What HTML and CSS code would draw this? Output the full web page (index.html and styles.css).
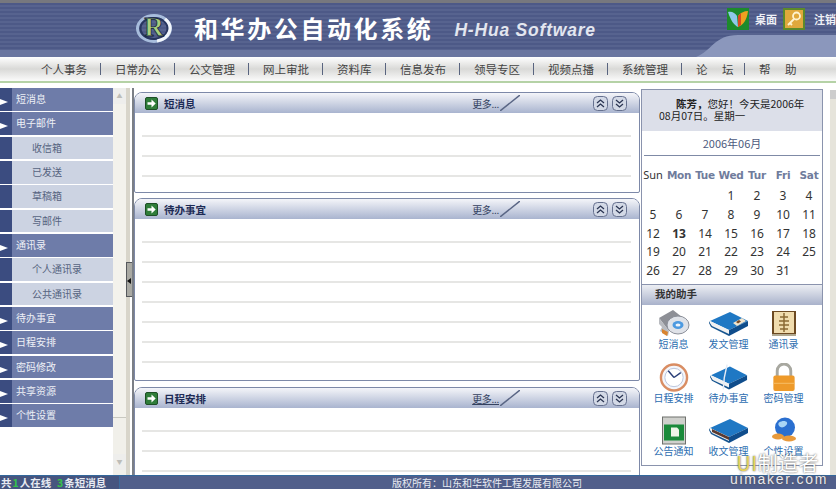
FILE: index.html
```html
<!doctype html>
<html>
<head>
<meta charset="utf-8">
<title>和华办公自动化系统</title>
<link rel="stylesheet" href="styles.css">
</head>

<body>
<svg class="defs" width="0" height="0">
	<symbol id="go" viewBox="0 0 13 13">
		<rect x="0.5" y="0.5" width="12" height="12" rx="1.5" fill="#2f7d3a" stroke="#1d4f26"/>
		<path d="M2.5 5.2h4V2.6l4.2 3.9-4.2 3.9V7.8h-4z" fill="#fff"/>
	</symbol>
	<symbol id="up" viewBox="0 0 15 15">
		<rect x="0.5" y="0.5" width="14" height="14" rx="4" fill="#d3d9e6" stroke="#66718f"/>
		<path d="M4 7l3.5-3L11 7M4 11l3.5-3 3.5 3" fill="none" stroke="#2b3553" stroke-width="1.3"/>
	</symbol>
	<symbol id="down" viewBox="0 0 15 15">
		<rect x="0.5" y="0.5" width="14" height="14" rx="4" fill="#d3d9e6" stroke="#66718f"/>
		<path d="M4 4l3.5 3L11 4M4 8l3.5 3L11 8" fill="none" stroke="#2b3553" stroke-width="1.3"/>
	</symbol>
	<symbol id="book" viewBox="0 0 40 28">
		<path d="M1 12L21 3l18 9-19 9z" fill="#1f78c4"/>
		<path d="M1 12l19 9v4L3 17z" fill="#f1f1f1"/>
		<path d="M1 12v2l2 3 17 8v2L2 18 0 14z" fill="#17558f"/>
		<path d="M20 21l19-9v5L20 27z" fill="#0f4d8c"/>
	</symbol>
</svg>

<div class="top-strip"></div>
<div class="banner">
	<svg class="banner-curve" width="140" height="22" viewBox="0 0 140 22"><path d="M0 22C16 16 18 0 42 0H140V22z" fill="#8b97bc"/></svg>
	<svg class="logo" width="38" height="31" viewBox="0 0 38 31">
		<ellipse cx="19" cy="15.5" rx="16.500" ry="13" fill="none" stroke="#a7bcdc" stroke-width="3"/>
		<ellipse cx="19" cy="15.5" rx="13.500" ry="10.500" fill="none" stroke="#27365f" stroke-width="2"/>
		<path d="M30 6a16.500 13 0 0 1-8 22" fill="none" stroke="#f2f6fb" stroke-width="3"/>
		<text x="19" y="23" text-anchor="middle" class="logo-r">R</text>
	</svg>
	<div class="title">和华办公自动化系统</div>
	<div class="subtitle">H-Hua Software</div>
	<div class="tools">
		<svg width="22" height="22" viewBox="0 0 22 22">
			<rect width="22" height="22" fill="#1d8a2c"/>
			<path d="M1 4c4-1 7 1 9 4l1 11C7 17 4 13 1 4z" fill="#8fc8ea"/>
			<path d="M21 3c-4 0-8 2-10 5v11c5-2 9-7 10-16z" fill="#f0a020"/>
			<path d="M14 5l-3 3v11l3-2z" fill="#d84a20"/>
		</svg>
		<span class="tool-text">桌面</span>
		<svg class="tool-key" width="22" height="22" viewBox="0 0 22 22">
			<rect width="22" height="22" fill="#5d8a2a"/>
			<rect x="2" y="2" width="18" height="18" fill="#e0a83c"/>
			<circle cx="13.500" cy="8" r="3.500" fill="none" stroke="#fff3cf" stroke-width="1.800"/>
			<path d="M11 11l-6 6M7 15l2 2" fill="none" stroke="#fff3cf" stroke-width="1.800"/>
		</svg>
		<span class="tool-text">注销</span>
	</div>
</div>

<ul class="nav">
	<li>个人事务</li>
	<li>日常办公</li>
	<li>公文管理</li>
	<li>网上审批</li>
	<li>资料库</li>
	<li>信息发布</li>
	<li>领导专区</li>
	<li>视频点播</li>
	<li>系统管理</li>
	<li class="wide">论 坛</li>
	<li class="wide last">帮 助</li>
</ul>

<div class="content">
	<div class="side">
		<ul class="menu">
			<li class="group">短消息</li>
			<li class="group">电子邮件</li>
			<li class="sub">收信箱</li>
			<li class="sub">已发送</li>
			<li class="sub">草稿箱</li>
			<li class="sub">写邮件</li>
			<li class="group">通讯录</li>
			<li class="sub">个人通讯录</li>
			<li class="sub">公共通讯录</li>
			<li class="group">待办事宜</li>
			<li class="group">日程安排</li>
			<li class="group">密码修改</li>
			<li class="group">共享资源</li>
			<li class="group">个性设置</li>
		</ul>
		<div class="side-scroll">
			<div class="scroll-btn">▲</div>
			<div class="scroll-thumb"></div>
			<div class="scroll-btn scroll-end">▼</div>
		</div>
	</div>

	<div class="split"><div class="split-handle"></div></div>

	<div class="main">
		<div class="panel panel-msg">
			<div class="panel-head">
				<svg class="go" width="13" height="13"><use href="#go"/></svg>
				<b>短消息</b>
				<span class="more">更多...</span>
				<svg class="slash" width="20" height="16" viewBox="0 0 20 16"><path d="M0 16L20 0" stroke="#5a6685" stroke-width="1.500"/></svg>
				<svg class="btn" width="15" height="15"><use href="#up"/></svg>
				<svg class="btn" width="15" height="15"><use href="#down"/></svg>
			</div>
			<div class="rows"><div></div><div></div><div></div></div>
		</div>

		<div class="panel panel-todo">
			<div class="panel-head">
				<svg class="go" width="13" height="13"><use href="#go"/></svg>
				<b>待办事宜</b>
				<span class="more">更多...</span>
				<svg class="slash" width="20" height="16" viewBox="0 0 20 16"><path d="M0 16L20 0" stroke="#5a6685" stroke-width="1.500"/></svg>
				<svg class="btn" width="15" height="15"><use href="#up"/></svg>
				<svg class="btn" width="15" height="15"><use href="#down"/></svg>
			</div>
			<div class="rows"><div></div><div></div><div></div><div></div><div></div><div></div><div></div></div>
		</div>

		<div class="panel panel-plan">
			<div class="panel-head">
				<svg class="go" width="13" height="13"><use href="#go"/></svg>
				<b>日程安排</b>
				<span class="more more-link">更多...</span>
				<svg class="slash" width="20" height="16" viewBox="0 0 20 16"><path d="M0 16L20 0" stroke="#5a6685" stroke-width="1.500"/></svg>
				<svg class="btn" width="15" height="15"><use href="#up"/></svg>
				<svg class="btn" width="15" height="15"><use href="#down"/></svg>
			</div>
			<div class="rows"><div></div><div></div><div></div></div>
		</div>
	</div>

	<div class="right">
		<div class="cal-box">
			<div class="hello"><b>陈芳，</b>您好！今天是2006年<br>08月07日。星期一</div>
			<div class="month">2006年06月</div>
			<div class="cal">
				<span class="sun">Sun</span><span class="wk">Mon</span><span class="wk">Tue</span><span class="wk">Wed</span><span class="wk">Tur</span><span class="wk">Fri</span><span class="wk">Sat</span>
				<span></span><span></span><span></span><span>1</span><span>2</span><span>3</span><span>4</span>
				<span>5</span><span>6</span><span>7</span><span>8</span><span>9</span><span>10</span><span>11</span>
				<span>12</span><span class="today">13</span><span>14</span><span>15</span><span>16</span><span>17</span><span>18</span>
				<span>19</span><span>20</span><span>21</span><span>22</span><span>23</span><span>24</span><span>25</span>
				<span>26</span><span>27</span><span>28</span><span>29</span><span>30</span><span>31</span><span></span>
			</div>
		</div>
		<div class="help-box">
			<div class="help-head">我的助手</div>
			<div class="help-grid">
				<div class="tool">
					<svg width="32" height="29" viewBox="0 0 32 29">
						<path d="M1 9L15 1l9 7-13 14z" fill="#8d8f96"/>
						<path d="M1 9l10 13-1 5-8-5 2-4-3-3z" fill="#b9bbc0"/>
						<path d="M4 20l6 3-1 4-5-3z" fill="#d9842f"/>
						<ellipse cx="20" cy="16" rx="11" ry="9" fill="#dfe2e8" stroke="#8b8f99"/>
						<ellipse cx="20" cy="16" rx="5.500" ry="4" fill="#4d9ae0"/>
						<ellipse cx="20" cy="16" rx="2.500" ry="1.600" fill="#eef4fb"/>
					</svg>
					<span>短消息</span>
				</div>
				<div class="tool">
					<svg width="40" height="29" viewBox="0 0 40 29"><use href="#book" width="40" height="28"/><path d="M24 14l9-5 4 3-9 5z" fill="#f2e6cf"/><path d="M27 13l3-2 2 1.500-3 2z" fill="#7a4a25"/></svg>
					<span>发文管理</span>
				</div>
				<div class="tool">
					<svg width="26" height="29" viewBox="0 0 26 29">
						<rect x="1" y="2" width="24" height="24" fill="#6d4a22"/>
						<rect x="3" y="3" width="20" height="21" fill="#f0dcae"/>
						<path d="M13 4v19M9 8h8M8 12h10M8 16h10M9 20h8" stroke="#8a6a35" stroke-width="1.500"/>
						<rect x="1" y="25" width="24" height="2" fill="#b0a890"/>
					</svg>
					<span>通讯录</span>
				</div>
				<div class="tool">
					<svg width="30" height="29" viewBox="0 0 30 30">
						<circle cx="15" cy="15" r="13.500" fill="#f4f6fb" stroke="#d98d63" stroke-width="2.500"/>
						<circle cx="15" cy="15" r="9.500" fill="#fff" stroke="#b9c4dc"/>
						<path d="M15 15L9 8M15 15l7-5" stroke="#2a3f78" stroke-width="1.500" fill="none"/>
					</svg>
					<span>日程安排</span>
				</div>
				<div class="tool">
					<svg width="38" height="29" viewBox="0 0 40 29">
						<use href="#book" width="40" height="28"/>
						<path d="M18 1l-3 14-1 12" stroke="#e5ebf5" stroke-width="1.500" fill="none"/>
					</svg>
					<span>待办事宜</span>
				</div>
				<div class="tool">
					<svg width="24" height="29" viewBox="0 0 24 30">
						<path d="M5 14V8a7 7 0 0 1 14 0v6" fill="none" stroke="#a8a8a0" stroke-width="3"/>
						<rect x="1" y="13" width="22" height="16" rx="2" fill="#ee9a2a"/>
						<path d="M1 21h22" stroke="#f7be69"/>
					</svg>
					<span>密码管理</span>
				</div>
				<div class="tool">
					<svg width="24" height="29" viewBox="0 0 24 28">
						<rect x="0.500" y="0.500" width="23" height="27" fill="#cfd0cc" stroke="#6e706c"/>
						<rect x="2" y="8" width="20" height="16" fill="#1a8a3a"/>
						<path d="M9 11h6l2 2v7H9z" fill="#eef5e8"/>
					</svg>
					<span>公告通知</span>
				</div>
				<div class="tool">
					<svg width="40" height="29" viewBox="0 0 40 29"><use href="#book" width="40" height="28"/><path d="M3 16l17 8v-3L3 13z" fill="#5a3a30"/></svg>
					<span>收文管理</span>
				</div>
				<div class="tool">
					<svg width="28" height="29" viewBox="0 0 28 28">
						<circle cx="15" cy="11" r="10" fill="#2a6fd0"/>
						<path d="M9 6c3-2 7-2 8 0s-3 5-5 5-5-3-3-5z" fill="#a9d4f5"/>
						<ellipse cx="8" cy="20" rx="6" ry="3" fill="#e89a3c"/>
						<ellipse cx="19" cy="22" rx="7" ry="3" fill="#e89a3c"/>
					</svg>
					<span>个性设置</span>
				</div>
			</div>
		</div>
	</div>

	<div class="page-scroll">
		<div class="page-btn"></div>
	</div>
</div>

<div class="foot">
	<div class="foot-left">共<i>1</i>人在线 &nbsp;<i>3</i>条短消息</div>
	<div class="foot-copy">版权所有：山东和华软件工程发展有限公司</div>
</div>

<div class="mark">
	<div class="mark-top"><em>UI</em>制造者</div>
	<div class="mark-url">uimaker.com</div>
</div>
</body>
</html>
```

FILE: styles.css
```css
*{margin:0; padding:0; list-style:none; box-sizing:border-box;}
html,body{width:836px; height:489px; overflow:hidden; background:#fff;}
body{
	position:relative;
	display:flex; flex-direction:column;
	font-family:"Noto Sans CJK SC","Liberation Sans",sans-serif;
	font-size:10px; color:#333;
}
.defs{position:absolute;}

/* header */
.top-strip{height:3px; background:#77787e; flex:none;}
.banner{
	position:relative;
	height:54px; flex:none;
	display:flex; align-items:flex-start;
	padding-left:135px;
	background:repeating-linear-gradient(#4d5987 0,#4d5987 2px,#57638f 2px,#57638f 4px);
	border-bottom:7px solid #6a76a0;
}
.banner-curve{position:absolute; right:0; bottom:-7px;}
.logo{margin-top:10px; flex:none;}
.logo-r{font-family:"Liberation Serif",serif; font-size:27px; font-weight:bold; fill:#a9cf7c; stroke:#14213f; stroke-width:0.8px;}
.title{
	margin:7px 0 0 21px;
	font-size:24px; line-height:36px; font-weight:bold;
	letter-spacing:2.600px; color:#fff; white-space:nowrap;
}
.subtitle{
	margin:15px 0 0 21px;
	font-family:"Liberation Sans",sans-serif;
	font-size:17.500px; line-height:24px; font-weight:bold; font-style:italic;
	letter-spacing:0.800px; color:#e3e6ef; white-space:nowrap;
}
.tools{
	position:absolute; left:727px; top:5px;
	display:flex; align-items:center; white-space:nowrap;
}
.tool-text{margin-left:6px; font-size:11px; font-weight:bold; color:#eef0f6;}
.tool-key{margin-left:6px;}
.tool-key + .tool-text{margin-left:9px;}

.nav{
	display:flex; align-items:center; flex:none;
	height:26px; padding:1px 0 1px 41px;
	background:linear-gradient(#fff,#d9d9d7 50%,#fbfbfb);
	border-bottom:2px solid #b5d2a6;
	font-size:11.500px; color:#444;
}
.nav li{
	width:60px; margin-right:14px; height:12px; line-height:12px;
	border-right:1px solid #59647f; white-space:nowrap;
}
.nav li:nth-child(5){width:49px;}
.nav li.wide{width:49px; word-spacing:12px;}
.nav li.last{border-right:0; margin-right:0;}

/* body of the page */
.content{
	flex:1; min-height:0;
	display:flex; padding-top:5px;
}
.side{width:126px; flex:none; display:flex;}
.menu{
	width:113px; height:339px;
	display:grid; grid-auto-rows:1fr; row-gap:1.500px;
}
.menu li{
	position:relative;
	border-left:12px solid #3b4c80;
	line-height:21px;
	white-space:nowrap;
}
.group{background:#6e7ca9; color:#edf0f6; padding-left:4px;}
.group::before{
	content:""; position:absolute; left:-12px; top:11px;
	border-left:8px solid #fff;
	border-top:3px solid transparent; border-bottom:3px solid transparent;
}
.sub{background:#ccd3e2; color:#56637f; padding-left:20px;}
.side-scroll{
	width:13px; height:100%;
	display:flex; flex-direction:column;
	background:#f1f0ea;
}
.scroll-btn{height:16px; flex:none; background:#eeeeec; color:#bdbdb8; font-size:6px; line-height:16px; text-align:center;}
.scroll-thumb{height:314px; flex:none; border-bottom:1px solid #c8c8c0; background:#f3f2ec;}
.scroll-end{margin-top:auto; margin-bottom:5px;}

.split{
	position:relative;
	width:8px; flex:none;
	background:#fff;
	border-left:4px solid #d8d5ca;
	border-right:2px solid #7b7f86;
}
.split-handle{
	position:absolute; left:-4px; top:174px;
	width:6px; height:35px;
	background:#a9a9a3;
	border:1px solid #55585c; border-width:1px 0 1px 1px;
}
.split-handle::after{
	content:""; position:absolute; left:0; top:15px;
	border-right:4px solid #111;
	border-top:3px solid transparent; border-bottom:3px solid transparent;
}

.main{width:506px; flex:none; padding-top:4px; overflow:hidden;}
.panel{
	border:1px solid #7d89a8; border-radius:8px 8px 2px 2px;
	margin-bottom:6px; background:#fff; overflow:hidden;
}
.panel-msg{height:101px; margin-bottom:5px;}
.panel-todo{height:183px;}
.panel-plan{height:120px;}
.panel-head{
	display:flex; align-items:center;
	height:20px; padding:0 12px 0 10px;
	background:linear-gradient(#f4f5f9,#a9b4cf);
	color:#1d2b55;
}
.go{flex:none;}
.panel-head b{margin-left:6px; font-size:10.500px;}
.more{margin-left:auto; color:#34415f; font-size:10px; letter-spacing:-0.300px;}
.more-link{text-decoration:underline;}
.slash{margin-left:1px; margin-right:69px; flex:none;}
.btn{margin-left:4px; flex:none;}
.rows{padding:4px 8px 0 7px;}
.rows div{height:20px; border-bottom:2px solid #e6e6e4;}

/* calendar and helpers */
.right{width:182px; flex:none; margin-left:1px; padding-top:1px;}
.cal-box{
	height:195px;
	border:1px solid #8a93ad; border-bottom:0;
	background:#fff;
}
.hello{
	height:41px; padding:8px 0 0 17px;
	text-indent:17px; line-height:12px;
	background:#dcdfe9; color:#222; font-size:10.500px;
}
.month{
	height:25px; line-height:25px; margin:0 2px;
	border-bottom:1px solid #7f8aa6;
	text-align:center; font-size:11px; color:#4d5a7d;
}
.cal{
	display:grid; grid-template-columns:repeat(7,26px);
	grid-template-rows:21px repeat(5,18.800px);
	margin-left:-2px; padding-top:10px;
	font-family:"Noto Sans",sans-serif; font-size:12px; color:#333;
	text-align:center;
}
.cal span{line-height:18px;}
.cal .sun{font-size:11px;}
.cal .wk{font-family:"DejaVu Sans",sans-serif; font-weight:bold; color:#6f7c9c; font-size:10.500px; letter-spacing:-0.300px;}
.cal .today{font-weight:bold;}
.help-box{
	height:182px;
	border:1px solid #8a93ad;
	background:#fff;
}
.help-head{
	height:20px; line-height:18px; padding-left:13px;
	background:linear-gradient(#eceef3,#a9b2cb);
	font-size:10.500px; font-weight:bold; color:#333;
}
.help-grid{
	display:grid; grid-template-columns:repeat(3,55px);
	grid-auto-rows:53.500px;
	padding:4px 0 0 4px;
}
.tool{
	display:flex; flex-direction:column; align-items:center;
	color:#2c6db0; white-space:nowrap; line-height:12px;
}
.tool svg{flex:none;}

.page-scroll{
	width:13px; flex:none; padding-top:2px; padding-left:7px;
}
.page-btn{height:100%; background:linear-gradient(#cdcdcd 0,#cdcdcd 9px,#e6e4db 9px);}

/* footer */
.foot{
	display:flex; flex:none;
	height:14px; line-height:13px;
	background:#515f8b;
	border-top:1px solid #33689c;
	color:#e8ebf2; white-space:nowrap;
}
.foot-left{width:120px; padding-left:1px; font-size:10.500px; font-weight:bold; border-right:1px solid #3c6b9c; background:#46557f; overflow:hidden;}
.foot-left i{font-style:normal; color:#35c24a; margin:0 1px;}
.foot-copy{margin-left:272px;}

/* site watermark */
.mark{
	position:absolute; right:8px; bottom:3px;
	text-align:right; color:#fff; white-space:nowrap;
	text-shadow:0 0 2px #444;
}
.mark-top{font-size:20px; line-height:20px; letter-spacing:0.500px; padding-right:9px;}
.mark-top em{font-style:normal; color:#e8d35a;}
.mark-url{font-family:"Liberation Sans",sans-serif; font-size:14px; line-height:13px; letter-spacing:1.700px; color:#e8e8ee;}
```
